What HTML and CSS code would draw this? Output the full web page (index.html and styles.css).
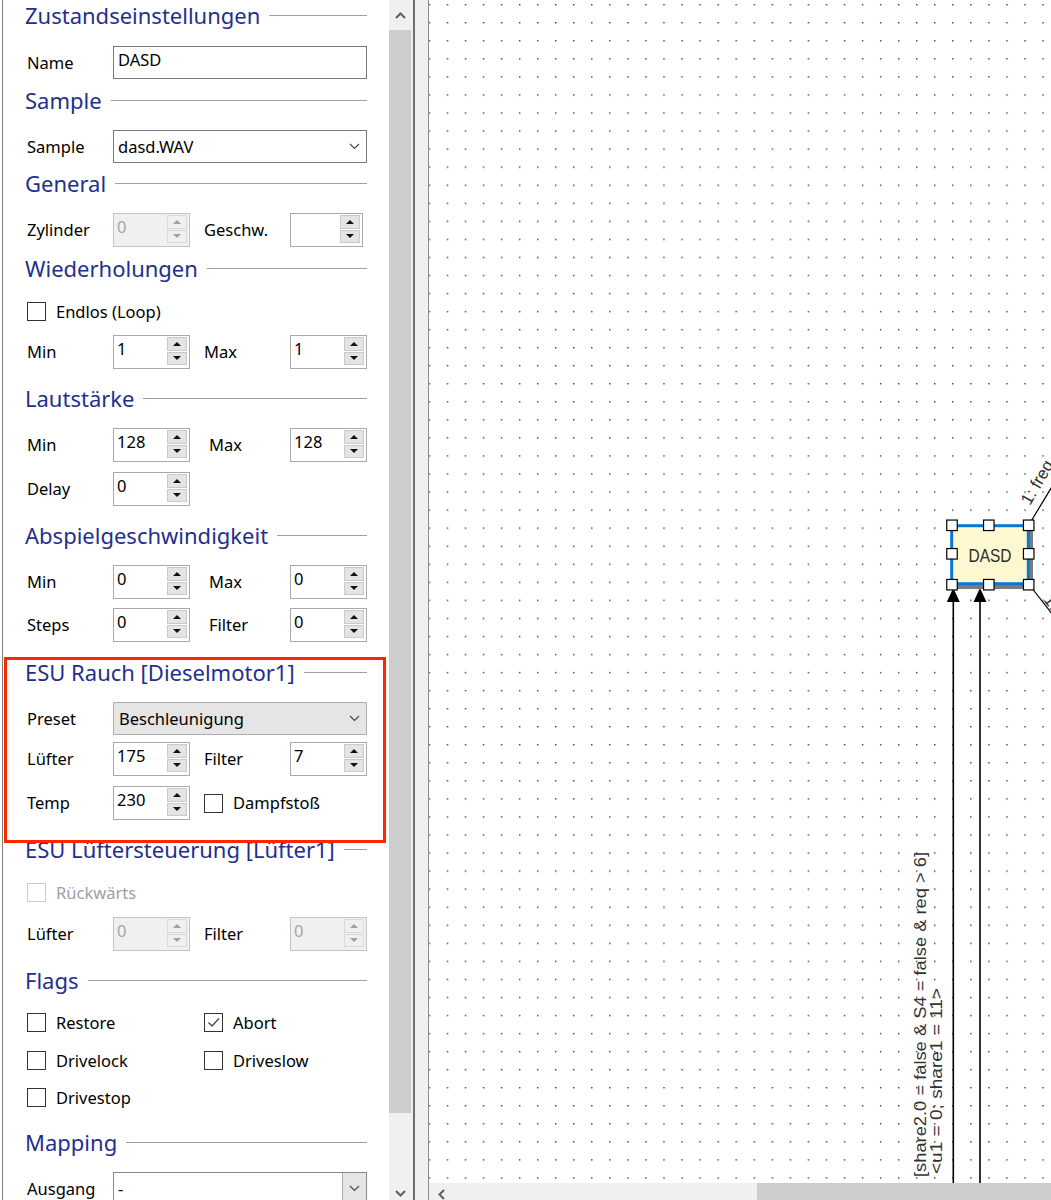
FILE: index.html
```html
<!DOCTYPE html>
<html lang="de">
<head>
<meta charset="utf-8">
<title>Zustandseinstellungen</title>
<link rel="stylesheet" href="styles.css">
</head>
<body>
<div class="app">
  <aside class="panel">
    <div class="sect-h"><span>Zustandseinstellungen</span></div>
    <div class="row m16"><span class="lbl">Name</span><div class="textbox">DASD</div></div>

    <div class="sect-h m6"><span>Sample</span></div>
    <div class="row m15"><span class="lbl">Sample</span><div class="combo"><span>dasd.WAV</span><svg class="chev" width="11" height="7" viewBox="0 0 11 7"><path d="M1 1 L5.5 5.5 L10 1"/></svg></div></div>

    <div class="sect-h m5"><span>General</span></div>
    <div class="row m15"><span class="lbl">Zylinder</span><div class="spin off"><span class="val">0</span><span class="btns"><i class="up"></i><i class="dn"></i></span></div><span class="lbl2">Geschw.</span><div class="spin narrow"><span class="val"></span><span class="btns"><i class="up"></i><i class="dn"></i></span></div></div>

    <div class="sect-h m6"><span>Wiederholungen</span></div>
    <div class="chkrow m19"><span class="chk"><span class="box"></span>Endlos (Loop)</span></div>
    <div class="row m14"><span class="lbl">Min</span><div class="spin"><span class="val">1</span><span class="btns"><i class="up"></i><i class="dn"></i></span></div><span class="lbl2">Max</span><div class="spin"><span class="val">1</span><span class="btns"><i class="up"></i><i class="dn"></i></span></div></div>

    <div class="sect-h m14"><span>Lautstärke</span></div>
    <div class="row m15"><span class="lbl">Min</span><div class="spin"><span class="val">128</span><span class="btns"><i class="up"></i><i class="dn"></i></span></div><span class="lbl2 wide">Max</span><div class="spin"><span class="val">128</span><span class="btns"><i class="up"></i><i class="dn"></i></span></div></div>
    <div class="row m10"><span class="lbl">Delay</span><div class="spin"><span class="val">0</span><span class="btns"><i class="up"></i><i class="dn"></i></span></div></div>

    <div class="sect-h m14"><span>Abspielgeschwindigkeit</span></div>
    <div class="row m15"><span class="lbl">Min</span><div class="spin"><span class="val">0</span><span class="btns"><i class="up"></i><i class="dn"></i></span></div><span class="lbl2 wide">Max</span><div class="spin"><span class="val">0</span><span class="btns"><i class="up"></i><i class="dn"></i></span></div></div>
    <div class="row m9"><span class="lbl">Steps</span><div class="spin"><span class="val">0</span><span class="btns"><i class="up"></i><i class="dn"></i></span></div><span class="lbl2 wide">Filter</span><div class="spin"><span class="val">0</span><span class="btns"><i class="up"></i><i class="dn"></i></span></div></div>

    <div class="sect-h m15"><span>ESU Rauch [Dieselmotor1]</span></div>
    <div class="row m15"><span class="lbl">Preset</span><div class="combo flat"><span>Beschleunigung</span><svg class="chev" width="11" height="7" viewBox="0 0 11 7"><path d="M1 1 L5.5 5.5 L10 1"/></svg></div></div>
    <div class="row m7"><span class="lbl">Lüfter</span><div class="spin"><span class="val">175</span><span class="btns"><i class="up"></i><i class="dn"></i></span></div><span class="lbl2">Filter</span><div class="spin"><span class="val">7</span><span class="btns"><i class="up"></i><i class="dn"></i></span></div></div>
    <div class="row m10"><span class="lbl">Temp</span><div class="spin"><span class="val">230</span><span class="btns"><i class="up"></i><i class="dn"></i></span></div><span class="chk inrow"><span class="box"></span>Dampfstoß</span></div>

    <div class="sect-h m14"><span>ESU Lüftersteuerung [Lüfter1]</span></div>
    <div class="chkrow m19"><span class="chk off"><span class="box"></span>Rückwärts</span></div>
    <div class="row m15"><span class="lbl">Lüfter</span><div class="spin off"><span class="val">0</span><span class="btns"><i class="up"></i><i class="dn"></i></span></div><span class="lbl2">Filter</span><div class="spin off"><span class="val">0</span><span class="btns"><i class="up"></i><i class="dn"></i></span></div></div>

    <div class="sect-h m14"><span>Flags</span></div>
    <div class="chkrow m18"><span class="chk"><span class="box"></span>Restore</span><span class="chk"><span class="box"><svg width="17" height="17" viewBox="0 0 17 17"><path d="M3.5 8.5 L7 12 L14 4.5" class="tick"/></svg></span>Abort</span></div>
    <div class="chkrow m19"><span class="chk"><span class="box"></span>Drivelock</span><span class="chk"><span class="box"></span>Driveslow</span></div>
    <div class="chkrow m18"><span class="chk"><span class="box"></span>Drivestop</span></div>

    <div class="sect-h m20"><span>Mapping</span></div>
    <div class="row m15"><span class="lbl">Ausgang</span><div class="combo withbtn"><span>-</span><span class="dropbtn"><svg class="chev" width="11" height="7" viewBox="0 0 11 7"><path d="M1 1 L5.5 5.5 L10 1"/></svg></span></div></div>

    <div class="redmark"></div>
  </aside>

  <div class="vscroll">
    <div class="vs-btn"><svg width="11" height="7" viewBox="0 0 11 7"><path d="M1 6 L5.5 1.5 L10 6" class="arrow"/></svg></div>
    <div class="vs-thumb"></div>
    <div class="vs-track"></div>
    <div class="vs-btn bottom"><svg width="11" height="7" viewBox="0 0 11 7"><path d="M1 1 L5.5 5.5 L10 1" class="arrow"/></svg></div>
  </div>

  <div class="splitter"></div>

  <main class="designer">
    <div class="canvas">
      <svg class="diagram" width="622" height="1183" viewBox="429 0 622 1183">
        <defs>
          <pattern id="dots" x="428.65" y="4" width="18.05" height="18.05" patternUnits="userSpaceOnUse">
            <rect x="0" y="0" width="1.4" height="1.4" fill="#3a3a3a"/>
          </pattern>
        </defs>
        <rect x="429" y="0" width="622" height="1183" fill="url(#dots)"/>

        <line x1="953.3" y1="598" x2="953.3" y2="1183" class="edge"/>
        <line x1="980" y1="598" x2="980" y2="1183" class="edge"/>
        <polygon points="953.3,588 946.8,602 959.8,602" fill="#000"/>
        <polygon points="980,588 973.5,602 986.5,602" fill="#000"/>

        <line x1="1030" y1="523" x2="1062" y2="470" class="edge thin"/>
        <line x1="1031" y1="587" x2="1060" y2="624" class="edge thin"/>
        <text class="lbltext" transform="translate(1030 506) rotate(-60)">1: freq</text>
        <text class="lbltext" transform="translate(1043 600) rotate(52)">1:</text>

        <text class="lbltext" transform="translate(925.5 1177) rotate(-90)" textLength="325" lengthAdjust="spacingAndGlyphs">[share2.0 = false &amp; S4 = false &amp; req &gt; 6]</text>
        <text class="lbltext" transform="translate(941.5 1174) rotate(-90)" textLength="186" lengthAdjust="spacingAndGlyphs">&lt;u1 = 0; share1 = 11&gt;</text>

        <rect x="955" y="529" width="78" height="60" fill="#7c7c7c"/>
        <rect x="951.7" y="525.7" width="76.6" height="58" fill="#fdf8d0" stroke="#0a78d7" stroke-width="3"/>
        <text class="nodetext" x="990" y="561.5" text-anchor="middle" textLength="43" lengthAdjust="spacingAndGlyphs">DASD</text>

        <g class="handle">
          <rect x="946.75" y="520.05" width="10.5" height="10.5"/>
          <rect x="983.55" y="520.05" width="10.5" height="10.5"/>
          <rect x="1023.45" y="520.05" width="10.5" height="10.5"/>
          <rect x="946.75" y="548.55" width="10.5" height="10.5"/>
          <rect x="1023.45" y="548.55" width="10.5" height="10.5"/>
          <rect x="946.75" y="579.45" width="10.5" height="10.5"/>
          <rect x="983.55" y="579.45" width="10.5" height="10.5"/>
          <rect x="1023.45" y="579.45" width="10.5" height="10.5"/>
        </g>
      </svg>
    </div>
    <div class="hscroll">
      <div class="hs-btn"><svg width="7" height="11" viewBox="0 0 7 11"><path d="M6 1 L1.5 5.5 L6 10" class="arrow"/></svg></div>
      <div class="hs-track"></div>
      <div class="hs-thumb"></div>
    </div>
  </main>
</div>
</body>
</html>
```

FILE: styles.css
```css
* { box-sizing: border-box; }
html, body { margin: 0; padding: 0; }
body {
  width: 1051px;
  height: 1200px;
  overflow: hidden;
  background: #fff;
  font-family: "Noto Sans", "Open Sans", "DejaVu Sans", sans-serif;
  font-size: 16.5px;
  color: #000;
}
.app { display: flex; height: 1200px; }

/* ---------- property panel ---------- */
.panel {
  position: relative;
  flex: none;
  width: 387px;
  height: 1200px;
  margin-left: 2px;
  border-left: 1px solid #7f7f7f;
  padding: 0 22px;
  overflow: hidden;
  background: #fff;
}
.sect-h {
  display: flex;
  align-items: center;
  gap: 9px;
  height: 30px;
  font-size: 22px;
  line-height: 30px;
  color: #232f8d;
  white-space: nowrap;
}
.sect-h span { flex: none; }
.sect-h::after {
  content: "";
  flex: 1;
  min-width: 0;
  height: 1px;
  background: #a0a0a0;
}
.m5 { margin-top: 5px; }
.m6 { margin-top: 6px; }
.m7 { margin-top: 7px; }
.m9 { margin-top: 9px; }
.m10 { margin-top: 10px; }
.m14 { margin-top: 14px; }
.m15 { margin-top: 15px; }
.m16 { margin-top: 16px; }
.m18 { margin-top: 18px; }
.m19 { margin-top: 19px; }
.m20 { margin-top: 20px; }

.row {
  display: flex;
  align-items: center;
  padding-left: 2px;
}
.lbl { flex: none; width: 86px; line-height: 22px; }
.lbl2 { flex: none; width: 86px; margin-left: 14px; line-height: 22px; }
.lbl2.wide { padding-left: 5px; }

.textbox {
  width: 254px;
  height: 33px;
  border: 1px solid #7a7a7a;
  padding: 2px 0 0 4px;
  line-height: 22px;
}

.combo {
  display: flex;
  align-items: center;
  justify-content: space-between;
  width: 254px;
  height: 33px;
  border: 1px solid #7a7a7a;
  padding-left: 4px;
  line-height: 22px;
  background: #fff;
}
.combo .chev { margin-right: 6px; }
.chev path { fill: none; stroke: #4a4a4a; stroke-width: 1.2; }
.combo.flat { background: #e5e5e5; border-color: #adadad; padding-left: 5px; }
.combo.withbtn { border-color: #8a8a8a; }
.dropbtn {
  display: flex;
  align-items: center;
  justify-content: center;
  width: 24px;
  height: 31px;
  background: #e5e5e5;
  border-left: 1px solid #adadad;
}
.dropbtn .chev { margin: 0; }

.spin {
  flex: none;
  display: flex;
  width: 77px;
  height: 34px;
  border: 1px solid #a9a9a9;
  background: #fff;
}
.spin.narrow { width: 73px; }
.spin .val { flex: 1; padding: 2px 0 0 3px; line-height: 22px; }
.spin .btns {
  display: flex;
  flex-direction: column;
  gap: 1px;
  width: 20px;
  margin: 1px 2px 3px 0;
}
.spin .btns i {
  flex: 1;
  display: flex;
  align-items: center;
  justify-content: center;
  background: #e4e4e4;
  border: 1px solid #cacaca;
}
.spin .up::after {
  content: "";
  border-left: 4px solid transparent;
  border-right: 4px solid transparent;
  border-bottom: 4px solid #111;
}
.spin .dn::after {
  content: "";
  border-left: 4px solid transparent;
  border-right: 4px solid transparent;
  border-top: 4px solid #111;
}
.spin.off { background: #f0f0f0; border-color: #c4c4c4; color: #a6a6a6; }
.spin.off .btns i { background: #f0f0f0; border-color: #dadada; }
.spin.off .up::after { border-bottom-color: #a0a0a0; }
.spin.off .dn::after { border-top-color: #a0a0a0; }

.chkrow {
  display: flex;
  align-items: center;
  height: 19px;
  padding-left: 2px;
}
.chk {
  display: flex;
  align-items: center;
  flex: none;
  width: 177px;
  line-height: 22px;
}
.chk.inrow { margin-left: 14px; width: auto; }
.box {
  flex: none;
  display: flex;
  width: 19px;
  height: 19px;
  margin-right: 10px;
  border: 1px solid #333;
  background: #fff;
}
.tick { fill: none; stroke: #4d4d4d; stroke-width: 1.4; }
.chk.off { color: #a0a0a0; }
.chk.off .box { border-color: #cccccc; }

.redmark {
  position: absolute;
  left: 1px;
  top: 657px;
  width: 382px;
  height: 186px;
  border: 3px solid #ff2600;
  pointer-events: none;
}

/* ---------- scrollbars / splitter ---------- */
.vscroll {
  flex: none;
  display: flex;
  flex-direction: column;
  width: 24px;
  height: 1200px;
  background: #f0f0f0;
}
.vs-btn {
  display: flex;
  align-items: center;
  justify-content: center;
  height: 30px;
  padding-right: 2px;
}
.vs-btn.bottom { height: 17px; padding-top: 3px; }
.arrow { fill: none; stroke: #5f5f5f; stroke-width: 2; }
.vs-thumb { width: 22px; height: 1083px; background: #cdcdcd; }
.vs-track { flex: 1; }

.splitter {
  flex: none;
  width: 16px;
  height: 1200px;
  background: #f0f0f0;
  border-left: 2px solid #6f6f6f;
  border-right: 1px solid #8c8c8c;
}

/* ---------- designer ---------- */
.designer {
  flex: 1;
  display: flex;
  flex-direction: column;
  height: 1200px;
  min-width: 0;
}
.canvas {
  position: relative;
  flex: 1;
  background: #fff;
  overflow: hidden;
}
.diagram { position: absolute; left: 0; top: 0; display: block; }
.edge { stroke: #000; stroke-width: 1.6; }
.edge.thin { stroke-width: 1.2; }
.lbltext {
  font-family: "Liberation Sans", Arial, sans-serif;
  font-size: 17px;
  fill: #333;
}
.nodetext {
  font-family: "Liberation Sans", Arial, sans-serif;
  font-size: 19px;
  fill: #2d2d2d;
}
.handle rect { fill: #fff; stroke: #000; stroke-width: 1.2; }

.hscroll {
  flex: none;
  display: flex;
  height: 17px;
  background: #f0f0f0;
}
.hs-btn {
  display: flex;
  align-items: center;
  justify-content: center;
  width: 24px;
  padding-top: 6px;
}
.hs-track { width: 304px; }
.hs-thumb { flex: 1; background: #cdcdcd; }
```
